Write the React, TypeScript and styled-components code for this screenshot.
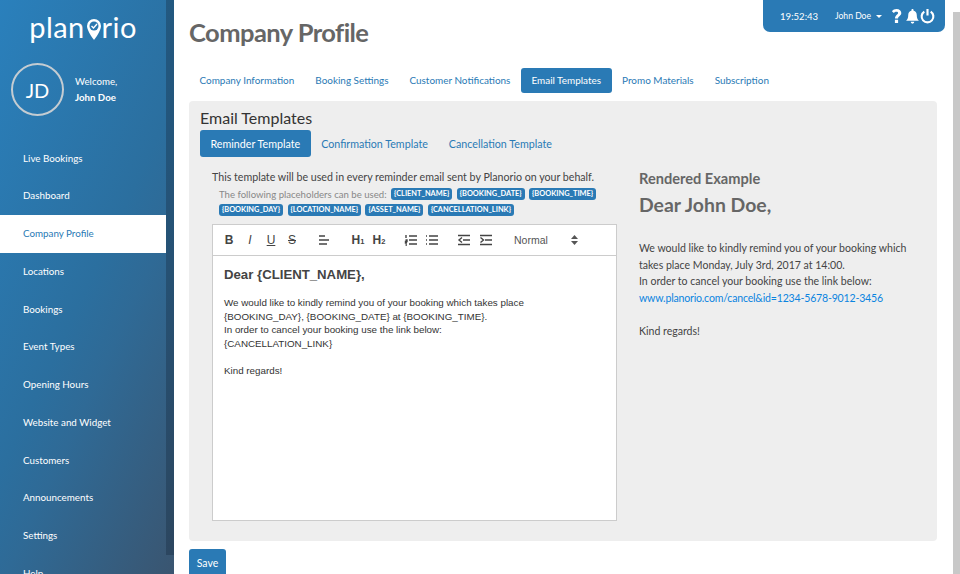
import React from 'react';
import styled, { createGlobalStyle } from 'styled-components';

const GlobalStyle = createGlobalStyle`
  html, body {
    margin: 0;
    padding: 0;
    height: 574px;
    overflow: hidden;
    background: #fff;
    font-family: Lato, "Open Sans", sans-serif;
    color: #333;
  }
  * { box-sizing: border-box; }
`;

const menu = [
  'Live Bookings',
  'Dashboard',
  'Company Profile',
  'Locations',
  'Bookings',
  'Event Types',
  'Opening Hours',
  'Website and Widget',
  'Customers',
  'Announcements',
  'Settings',
  'Help',
];
const topTabs = [
  'Company Information',
  'Booking Settings',
  'Customer Notifications',
  'Email Templates',
  'Promo Materials',
  'Subscription',
];
const subTabs = ['Reminder Template', 'Confirmation Template', 'Cancellation Template'];
const placeholders = [
  '{BOOKING_DAY}',
  '{LOCATION_NAME}',
  '{ASSET_NAME}',
  '{CANCELLATION_LINK}',
];

const Page = styled.div`
  display: flex;
  width: 960px;
  height: 574px;
  overflow: hidden;
  position: relative;
`;

const Sidebar = styled.aside`
  flex: 0 0 174px;
  display: flex;
  height: 574px;
  overflow: hidden;
  background: linear-gradient(115deg, #2a80bc 0%, #2b6f9f 50%, #2f6a96 62%, #3a5570 100%);
`;

const SideContent = styled.div`
  flex: 0 0 166px;
`;

const SideScroll = styled.div`
  flex: 0 0 8px;
  height: 555px;
  background: rgba(20, 40, 60, 0.35);
`;

const Logo = styled.div`
  display: flex;
  justify-content: center;
  align-items: center;
  height: 30px;
  margin-top: 12px;
  color: #fff;
  font-size: 29px;
  font-weight: 400;
  letter-spacing: 0.4px;
  line-height: 30px;
`;

const Profile = styled.div`
  display: flex;
  align-items: center;
  gap: 11px;
  margin-top: 21px;
  padding-left: 11px;
`;

const Avatar = styled.div`
  width: 53px;
  height: 53px;
  border-radius: 50%;
  border: 2px solid #c4ccd2;
  display: flex;
  align-items: center;
  justify-content: center;
  color: #fff;
  font-size: 20px;
`;

const Welcome = styled.div`
  color: #fff;
  font-size: 9.7px;
  line-height: 16px;
  margin-top: -2px;
`;

const WelcomeName = styled.div`
  font-weight: 700;
`;

const Nav = styled.nav`
  margin-top: 23.5px;
`;

const NavItem = styled.div<{ $active?: boolean }>`
  height: 37.75px;
  line-height: 37.75px;
  padding-left: 23px;
  font-size: 9.8px;
  color: ${p => (p.$active ? '#2a7ab5' : '#fff')};
  background: ${p => (p.$active ? '#fff' : 'transparent')};
`;

const Main = styled.main`
  flex: 1;
  padding: 0 15px;
  min-width: 0;
`;

const Title = styled.h1`
  margin: 14px 0 18px;
  font-size: 25.5px;
  line-height: 36px;
  font-weight: 700;
  letter-spacing: -0.55px;
  color: #666;
`;

const Pills = styled.div`
  display: flex;
`;

const Pill = styled.div<{ $active?: boolean; $big?: boolean }>`
  height: ${p => (p.$big ? 27 : 25)}px;
  line-height: ${p => (p.$big ? 27 : 25)}px;
  padding: 0 10.5px;
  font-size: ${p => (p.$big ? 10.7 : 9.95)}px;
  border-radius: 3px;
  color: ${p => (p.$active ? '#fff' : '#2a7ab5')};
  background: ${p => (p.$active ? '#2a7ab5' : 'transparent')};
`;

const Panel = styled.section`
  margin-top: 8px;
  width: 748px;
  height: 440px;
  padding: 5px 11px;
  background: #eeeeee;
  border-radius: 4px;
`;

const PanelTitle = styled.h2`
  margin: 0;
  font-size: 16px;
  line-height: 24px;
  font-weight: 400;
  color: #333;
`;

const Columns = styled.div`
  display: flex;
  margin-top: 13px;
`;

const LeftColumn = styled.div`
  flex: 0 0 405px;
  margin-left: 12px;
`;

const Intro = styled.div`
  font-size: 10.65px;
  line-height: 14px;
  margin-bottom: 2px;
  color: #444;
`;

const Hint = styled.div`
  font-size: 9.6px;
  color: #888;
  white-space: nowrap;
`;

const TagRow = styled.div`
  display: flex;
  align-items: center;
  gap: 4.5px;
  height: 16px;
  margin-left: 7px;
`;

const Tag = styled.span`
  display: inline-block;
  height: 12px;
  line-height: 12px;
  padding: 0 3px;
  border-radius: 3px;
  background: #2a7ab5;
  color: #fff;
  font-size: 7.4px;
  font-weight: 700;
`;

const Editor = styled.div`
  margin-top: 6px;
  height: 297px;
  background: #fff;
  border: 1px solid #ccc;
`;

const Toolbar = styled.div`
  display: flex;
  align-items: center;
  height: 31px;
  padding-left: 9px;
  border-bottom: 1px solid #ccc;
  color: #444;
`;

const ToolIcon = styled.svg<{ $gap?: number }>`
  width: 14px;
  height: 14px;
  margin-right: ${p => p.$gap ?? 7}px;
  fill: none;
  stroke: #444;
  stroke-width: 1.4;
  flex: none;
`;

const ToolGlyph = styled.span<{ $gap?: number; $variant?: 'italic' | 'under' | 'strike' }>`
  width: 14px;
  margin-right: ${p => p.$gap ?? 7}px;
  font: ${p => (p.$variant ? 400 : 700)} 12px "Liberation Sans", sans-serif;
  font-style: ${p => (p.$variant === 'italic' ? 'italic' : 'normal')};
  text-decoration: ${p =>
    p.$variant === 'under' ? 'underline' : p.$variant === 'strike' ? 'line-through' : 'none'};
  text-align: center;
  color: #444;
  flex: none;
  white-space: nowrap;

  small {
    font-size: 7.5px;
  }
`;

const HeadingSelect = styled.div`
  display: flex;
  align-items: center;
  justify-content: space-between;
  width: 64px;
  margin-left: 13px;
  font: 10.5px "Liberation Sans", sans-serif;
  color: #555;
`;

const EditorBody = styled.div`
  padding: 10px 11px;
  font: 9.8px/13.6px "Liberation Sans", sans-serif;
  color: #333;

  h3 {
    margin: 0 0 13px;
    font-size: 13.2px;
    line-height: 17px;
    font-weight: 700;
    color: #444;
  }
`;

const Gap = styled.div<{ $height: number }>`
  height: ${p => p.$height}px;
`;

const RightColumn = styled.div`
  flex: 1;
  margin-left: 22px;
`;

const ExampleLabel = styled.div`
  font-size: 14.6px;
  line-height: 18px;
  font-weight: 700;
  color: #666;
`;

const ExampleHeading = styled.div`
  margin-top: 5px;
  font-size: 19.4px;
  line-height: 24px;
  font-weight: 700;
  color: #666;
`;

const ExampleText = styled.div`
  margin-top: 23px;
  font-size: 10.55px;
  line-height: 16.5px;
  color: #444;

  a {
    color: #0a84e0;
    text-decoration: none;
    letter-spacing: -0.18px;
  }
`;

const SaveButton = styled.button`
  display: block;
  margin-top: 8px;
  width: 37px;
  height: 27px;
  padding: 0;
  border: 0;
  border-radius: 3px;
  background: #2a7ab5;
  color: #fff;
  font: 10.5px Lato, sans-serif;
`;

const Scrollbar = styled.div`
  flex: 0 0 7px;
  margin-left: 1px;
  margin-top: 12px;
  background: #c8c8c8;
`;

const TopBar = styled.div`
  position: absolute;
  top: 0;
  left: 763px;
  width: 182px;
  height: 32px;
  display: flex;
  align-items: center;
  padding-left: 17px;
  background: #2a7ab5;
  border-radius: 0 0 7px 7px;
  color: #fff;
`;

const Clock = styled.span`
  font-size: 9.6px;
  width: 55px;
`;

const UserMenu = styled.span`
  font-size: 8.6px;
  width: 54px;
  display: flex;
  align-items: center;
  gap: 5px;

  &::after {
    content: '';
    border-top: 3px solid #fff;
    border-left: 3px solid transparent;
    border-right: 3px solid transparent;
  }
`;

const TopIcon = styled.svg<{ $outline?: boolean }>`
  width: 15px;
  height: 16px;
  margin-right: 0.5px;
  fill: ${p => (p.$outline ? 'none' : '#fff')};
  stroke: ${p => (p.$outline ? '#fff' : 'none')};
  stroke-width: ${p => (p.$outline ? 2 : 0)};
  flex: none;
`;

export default function App() {
  return (
    <Page>
      <GlobalStyle />
      <Sidebar>
        <SideContent>
          <Logo>
            plan
            <svg width="16" height="24" viewBox="0 0 16 24" style={{ margin: '6px 0 0 1px' }}>
              <path d="M8 1a7 7 0 0 1 7 7c0 5-7 14-7 14S1 13 1 8a7 7 0 0 1 7-7z" fill="#fff" />
              <circle cx="8" cy="8" r="4.5" fill="#2a78b0" />
              <path d="M5.500 8l2 2 3.500-4" stroke="#fff" strokeWidth="1.4" fill="none" />
            </svg>
            rio
          </Logo>
          <Profile>
            <Avatar>JD</Avatar>
            <Welcome>
              Welcome,
              <WelcomeName>John Doe</WelcomeName>
            </Welcome>
          </Profile>
          <Nav>
            {menu.map(m => (
              <NavItem key={m} $active={m === 'Company Profile'}>
                {m}
              </NavItem>
            ))}
          </Nav>
        </SideContent>
        <SideScroll />
      </Sidebar>
      <Main>
        <Title>Company Profile</Title>
        <Pills>
          {topTabs.map(t => (
            <Pill key={t} $active={t === 'Email Templates'}>
              {t}
            </Pill>
          ))}
        </Pills>
        <Panel>
          <PanelTitle>Email Templates</PanelTitle>
          <Pills>
            {subTabs.map(t => (
              <Pill key={t} $big $active={t === 'Reminder Template'}>
                {t}
              </Pill>
            ))}
          </Pills>
          <Columns>
            <LeftColumn>
              <Intro>This template will be used in every reminder email sent by Planorio on your behalf.</Intro>
              <TagRow>
                <Hint>The following placeholders can be used:</Hint>
                <Tag>{'{CLIENT_NAME}'}</Tag>
                <Tag>{'{BOOKING_DATE}'}</Tag>
                <Tag>{'{BOOKING_TIME}'}</Tag>
              </TagRow>
              <TagRow>
                {placeholders.map(p => (
                  <Tag key={p}>{p}</Tag>
                ))}
              </TagRow>
              <Editor>
                <Toolbar>
                  <ToolGlyph>B</ToolGlyph>
                  <ToolGlyph $variant="italic">I</ToolGlyph>
                  <ToolGlyph $variant="under">U</ToolGlyph>
                  <ToolGlyph $variant="strike" $gap={18}>S</ToolGlyph>
                  <ToolIcon viewBox="0 0 14 14" $gap={20}>
                    <path d="M2 3h6M2 7h10M2 11h8" />
                  </ToolIcon>
                  <ToolGlyph>
                    H<small>1</small>
                  </ToolGlyph>
                  <ToolGlyph $gap={18}>
                    H<small>2</small>
                  </ToolGlyph>
                  <ToolIcon viewBox="0 0 14 14">
                    <path d="M5 3h8M5 7h8M5 11h8M2 2v3M1.500 7h1.500v1.500h-1.500V10h1.500M1.500 12h1.500" />
                  </ToolIcon>
                  <ToolIcon viewBox="0 0 14 14" $gap={18}>
                    <path d="M4 3h9M4 7h9M4 11h9M1 3h1M1 7h1M1 11h1" />
                  </ToolIcon>
                  <ToolIcon viewBox="0 0 14 14" $gap={8}>
                    <path d="M1 2.500h12M6 7h7M1 11.500h12M5 4.500L2 7l3 2.500" />
                  </ToolIcon>
                  <ToolIcon viewBox="0 0 14 14" $gap={8}>
                    <path d="M1 2.500h12M6 7h7M1 11.500h12M1.500 4.500L4.500 7l-3 2.500" />
                  </ToolIcon>
                  <HeadingSelect>
                    Normal
                    <svg width="7" height="10" viewBox="0 0 7 10">
                      <path d="M3.500 0L7 4H0zM3.500 10L0 6h7z" fill="#555" />
                    </svg>
                  </HeadingSelect>
                </Toolbar>
                <EditorBody>
                  <h3>Dear {'{CLIENT_NAME}'},</h3>
                  We would like to kindly remind you of your booking which takes place
                  <br />
                  {'{BOOKING_DAY}, {BOOKING_DATE} at {BOOKING_TIME}.'}
                  <br />
                  In order to cancel your booking use the link below:
                  <br />
                  {'{CANCELLATION_LINK}'}
                  <Gap $height={13.6} />
                  Kind regards!
                </EditorBody>
              </Editor>
            </LeftColumn>
            <RightColumn>
              <ExampleLabel>Rendered Example</ExampleLabel>
              <ExampleHeading>Dear John Doe,</ExampleHeading>
              <ExampleText>
                We would like to kindly remind you of your booking which
                <br />
                takes place Monday, July 3rd, 2017 at 14:00.
                <br />
                In order to cancel your booking use the link below:
                <br />
                <a>www.planorio.com/cancel&id=1234-5678-9012-3456</a>
                <Gap $height={16.5} />
                Kind regards!
              </ExampleText>
            </RightColumn>
          </Columns>
        </Panel>
        <SaveButton>Save</SaveButton>
      </Main>
      <Scrollbar />
      <TopBar>
        <Clock>19:52:43</Clock>
        <UserMenu>John Doe</UserMenu>
        <TopIcon viewBox="0 0 14 15">
          <path d="M7 1c2.800 0 4.500 1.600 4.500 3.800 0 2.600-3 3-3 5H5.600c0-3 2.900-3.400 2.900-5 0-.8-.6-1.300-1.600-1.300-1 0-1.700.5-2.400 1.300L2.700 3C3.800 1.700 5.200 1 7 1zM5.500 11h3v3h-3z" />
        </TopIcon>
        <TopIcon viewBox="0 0 14 15">
          <path d="M7 1c.6 0 1 .4 1 1v.5c2 .5 3 2 3 4 0 3 .7 4 2 5.500H1c1.300-1.500 2-2.500 2-5.500 0-2 1-3.500 3-4V2c0-.6.4-1 1-1zM5.300 13h3.400a1.700 1.700 0 0 1-3.400 0z" />
        </TopIcon>
        <TopIcon viewBox="0 0 14 15" $outline>
          <path d="M7 1v6M4 3.400a5.500 5.500 0 1 0 6 0" />
        </TopIcon>
      </TopBar>
    </Page>
  );
}
